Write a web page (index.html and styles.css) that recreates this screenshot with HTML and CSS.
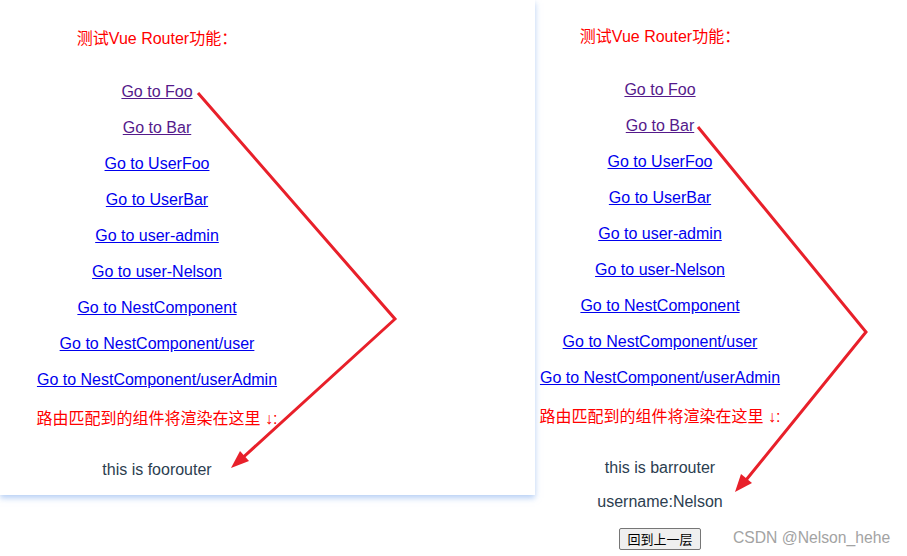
FILE: index.html
```html
<!DOCTYPE html>
<html lang="zh-CN">
<head>
  <meta charset="UTF-8" />
  <meta name="viewport" content="width=device-width, initial-scale=1.0"/>
  <title>Vue Router 测试</title>
  <link rel="stylesheet" href="styles.css">
</head>
<body>

  <div class="page">
    <!-- first screenshot: foo route -->
    <div class="card">
      <div class="app">
        <p class="title">测试Vue Router功能：</p>
        <div class="links">
          <a href="#" class="visited">Go to Foo</a>
          <a href="#" class="visited">Go to Bar</a>
          <a href="#">Go to UserFoo</a>
          <a href="#">Go to UserBar</a>
          <a href="#">Go to user-admin</a>
          <a href="#">Go to user-Nelson</a>
          <a href="#">Go to NestComponent</a>
          <a href="#">Go to NestComponent/user</a>
          <a href="#">Go to NestComponent/userAdmin</a>
        </div>
        <p class="hint">路由匹配到的组件将渲染在这里 ↓:</p>
        <div class="view">
          <p>this is foorouter</p>
        </div>
      </div>
    </div>

    <!-- second screenshot: bar route -->
    <div class="app app-right">
      <p class="title">测试Vue Router功能：</p>
      <div class="links">
        <a href="#" class="visited">Go to Foo</a>
        <a href="#" class="visited">Go to Bar</a>
        <a href="#">Go to UserFoo</a>
        <a href="#">Go to UserBar</a>
        <a href="#">Go to user-admin</a>
        <a href="#">Go to user-Nelson</a>
        <a href="#">Go to NestComponent</a>
        <a href="#">Go to NestComponent/user</a>
        <a href="#">Go to NestComponent/userAdmin</a>
      </div>
      <p class="hint">路由匹配到的组件将渲染在这里 ↓:</p>
      <div class="view">
        <p>this is barrouter</p>
        <p class="user">username:Nelson</p>
        <button class="back">回到上一层</button>
      </div>
    </div>
  </div>

  <!-- hand drawn arrows on top of the screenshots -->
  <svg class="arrows" width="907" height="556" viewBox="0 0 907 556">
    <polyline points="198,93 395,319 238,462" fill="none" stroke="#e8202a" stroke-width="3"/>
    <polygon points="231,468 240,451 249,461" fill="#e8202a"/>
    <polyline points="698,127 866,332 742,485" fill="none" stroke="#e8202a" stroke-width="3"/>
    <polygon points="735,492 741,474 752,483" fill="#e8202a"/>
  </svg>

  <div class="watermark">CSDN @Nelson_hehe</div>

</body>
</html>
```

FILE: styles.css
```css
body {
  margin: 0;
  background: #fff;
  font-family: "Liberation Sans", Arial, "Noto Sans CJK SC", sans-serif;
  font-size: 16px;
  line-height: 18px;
  width: 907px;
  height: 556px;
  overflow: hidden;
  position: relative;
}

p {
  margin: 0;
}

.page {
  display: flex;
  align-items: flex-start;
}

.card {
  width: 535px;
  height: 495px;
  box-sizing: border-box;
  padding-left: 32px;
  background: #fff;
  box-shadow: 0 3px 6px rgba(120, 165, 235, 0.55);
}

.app {
  width: 250px;
  display: flex;
  flex-direction: column;
  align-items: center;
  text-align: center;
  white-space: nowrap;
  padding-top: 30px;
}

.app-right {
  padding-top: 28px;
}

.title {
  color: #ff0000;
}

.links {
  display: flex;
  flex-direction: column;
  align-items: center;
  gap: 18px;
  margin-top: 35px;
}

.links a {
  color: #0000ee;
  text-decoration: underline;
}

.links a.visited {
  color: #551a8b;
}

.hint {
  color: #ff0000;
  margin-top: 21px;
}

.view {
  display: flex;
  flex-direction: column;
  align-items: center;
  margin-top: 33px;
  color: #2c3e50;
}

.user {
  margin-top: 16px;
}

.back {
  margin-top: 17px;
  height: 22px;
  padding: 0 7px;
  font-family: "Noto Sans CJK SC", sans-serif;
  font-size: 13px;
  line-height: 18px;
  color: #000;
  background: #efefef;
  border: 1px solid #767676;
  border-radius: 2px;
}

.arrows {
  position: absolute;
  left: 0;
  top: 0;
  pointer-events: none;
}

.watermark {
  position: absolute;
  left: 733px;
  top: 529px;
  font-size: 15.7px;
  line-height: 18px;
  color: #a3a3a3;
}
```
